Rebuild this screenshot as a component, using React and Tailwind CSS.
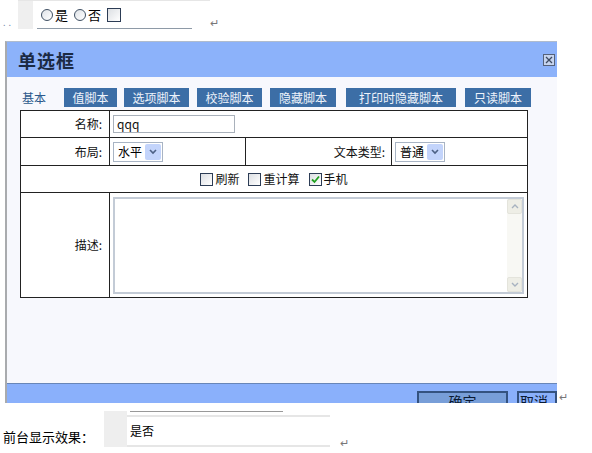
import React from "react";

const cjk = { fontFamily: '"Noto Sans CJK SC", "Noto Sans", sans-serif' };

function Radio({ label }) {
  return (
    <span className="inline-flex items-center gap-[2px]">
      <span className="inline-block h-[12px] w-[12px] rounded-full border border-[#3f5063] bg-gradient-to-br from-[#dfe3e8] to-white" />
      <span className="text-[13px] leading-none text-black">{label}</span>
    </span>
  );
}

function Check({ checked, label, big }) {
  return (
    <span className="inline-flex items-center gap-[2px]">
      <span
        className={`grid place-items-center border border-[#2c3c55] bg-gradient-to-br from-[#dcdfe3] to-white ${
          big ? "h-[14px] w-[14px]" : "h-[13px] w-[13px]"
        }`}
      >
        {checked ? (
          <svg width="9" height="9" viewBox="0 0 9 9">
            <path d="M1 4.5 L3.5 7 L8 1.5" fill="none" stroke="#21a121" strokeWidth="1.8" />
          </svg>
        ) : null}
      </span>
      {label ? <span className="text-[12px] leading-none text-[#111]">{label}</span> : null}
    </span>
  );
}

function Select({ value }) {
  return (
    <div className="flex h-[20px] w-[50px] items-center justify-between border border-[#a8b4c4] bg-white pl-[4px] pr-[1px]">
      <span className="text-[12px] leading-none text-black">{value}</span>
      <span className="grid h-[16px] w-[16px] place-items-center rounded-[2px] bg-[#c3d4fb]">
        <svg width="8" height="6" viewBox="0 0 8 6">
          <path d="M1 1 L4 4 L7 1" fill="none" stroke="#4d6185" strokeWidth="1.6" />
        </svg>
      </span>
    </div>
  );
}

function ScrollBtn({ up }) {
  return (
    <div className="grid h-[15px] w-[15px] place-items-center rounded-[2px] border border-[#e4e4dc] bg-[#eeeee6]">
      <svg width="8" height="5" viewBox="0 0 8 5">
        <path d={up ? "M1 4 L4 1 L7 4" : "M1 1 L4 4 L7 1"} fill="none" stroke="#a7b2c0" strokeWidth="1.4" />
      </svg>
    </div>
  );
}

const tabs = ["值脚本", "选项脚本", "校验脚本", "隐藏脚本", "打印时隐藏脚本", "只读脚本"];
const tabW = ["w-[53px]", "w-[65px]", "w-[65px]", "w-[66px]", "w-[110px]", "w-[66px]"];
const tabGap = ["ml-[18px]", "ml-[7px]", "ml-[8px]", "ml-[8px]", "ml-[10px]", "ml-[9px]"];

export default function App() {
  return (
    <div className="h-[453px] w-[592px] overflow-hidden bg-white" style={cjk}>
      {/* inline preview of the radio field */}
      <div className="flex h-[41px] items-start">
        <div className="flex h-[29px] w-[18px] items-end pb-[2px] pl-[3px]">
          <span className="text-[9px] leading-none tracking-[3px] text-[#7d93b0]">..</span>
        </div>
        <div className="h-[29px] w-[15px] border-t border-[#e6e6e6] bg-[#efefef]" />
        <div className="flex h-[29px] w-[177px] flex-col border-t border-[#e6e6e6]">
          <div className="flex flex-1 items-center gap-[6px] pl-[8px]">
            <Radio label="是" />
            <Radio label="否" />
            <Check big />
          </div>
          <div className="ml-[4px] h-[1px] w-[155px] bg-[#8e9aa7]" />
        </div>
        <span className="mt-[17px] text-[11px] leading-none text-[#777]">↵</span>
      </div>

      {/* dialog */}
      <div className="flex items-end">
        <div className="ml-[5px] flex h-[362px] w-[552px] flex-col overflow-hidden border-l-2 border-t border-l-[#a9abae] border-t-[#b0bccd]">
          <div className="flex h-[35px] items-center justify-between bg-[#8cb2fa] pl-[11px] pr-[2px]">
            <span className="text-[18px] font-bold leading-none tracking-[1px] text-[#1b2a44]">单选框</span>
            <span className="grid h-[12px] w-[12px] place-items-center border border-[#56627a] bg-[#c6d4ee]">
              <svg width="8" height="8" viewBox="0 0 8 8">
                <path d="M1 1 L7 7 M7 1 L1 7" stroke="#3d4a62" strokeWidth="1.3" />
              </svg>
            </span>
          </div>

          <div className="flex flex-1 flex-col bg-[#f7f8fd]">
            <div className="mt-[11px] flex h-[19px] items-center">
              <span className="ml-[15px] text-[12px] leading-none text-[#2d5a8c]">基本</span>
              {tabs.map((t, i) => (
                <span
                  key={t}
                  className={`${tabGap[i]} ${tabW[i]} grid h-[19px] place-items-center bg-[#3c6ea6] text-[12px] leading-none text-[#eef3fb]`}
                >
                  {t}
                </span>
              ))}
            </div>

            <div className="ml-[13px] mt-[3px] w-[508px] border border-[#222] bg-white text-[12px] text-[#111]">
              <div className="flex h-[27px] border-b border-[#222]">
                <div className="flex w-[89px] items-center justify-end border-r border-[#222] pr-[7px]">名称:</div>
                <div className="flex items-center pl-[3px]">
                  <div className="flex h-[18px] w-[122px] items-center border border-[#a9b1bb] pl-[3px] leading-none">qqq</div>
                </div>
              </div>
              <div className="flex h-[28px] border-b border-[#222]">
                <div className="flex w-[89px] items-center justify-end border-r border-[#222] pr-[7px]">布局:</div>
                <div className="flex w-[136px] items-center border-r border-[#222] pl-[3px]">
                  <Select value="水平" />
                </div>
                <div className="flex w-[146px] items-center justify-end border-r border-[#222] pr-[6px]">文本类型:</div>
                <div className="flex items-center pl-[3px]">
                  <Select value="普通" />
                </div>
              </div>
              <div className="flex h-[27px] items-center justify-center gap-[9px] border-b border-[#222]">
                <Check label="刷新" />
                <Check label="重计算" />
                <Check checked label="手机" />
              </div>
              <div className="flex h-[104px]">
                <div className="flex w-[89px] items-center justify-end border-r border-[#222] pr-[7px]">描述:</div>
                <div className="flex items-center pl-[3px]">
                  <div className="flex h-[97px] w-[411px] justify-end border-2 border-[#c3cbd6]">
                    <div className="flex w-[15px] flex-col justify-between bg-[#f8f8f4]">
                      <ScrollBtn up />
                      <ScrollBtn />
                    </div>
                  </div>
                </div>
              </div>
            </div>
          </div>

          <div className="flex h-[20px] items-start border-t border-[#6886b8] bg-[#8ab0fb] pt-[7px]">
            <span className="ml-[410px] flex h-[22px] w-[99px] justify-center border-2 border-[#34527f] bg-[#789ed8] pt-[1px] text-[14px] leading-none text-[#0b1a33]">
              确定
            </span>
            <span className="ml-[9px] flex h-[22px] w-[40px] shrink-0 justify-start border-2 border-[#34527f] bg-[#8ab0fb] pl-[1px] pt-[1px] text-[14px] leading-none text-[#0b1a33]">
              取消
            </span>
          </div>
        </div>
        <span className="mb-[1px] ml-[2px] text-[11px] leading-none text-[#777]">↵</span>
      </div>

      {/* front-end preview */}
      <div className="flex items-start">
        <span className="ml-[3px] mt-[27px] w-[101px] text-[13px] leading-none text-black">前台显示效果：</span>
        <div className="mt-[8px] flex h-[36px] w-[226px] flex-col">
          <div className="flex h-full">
            <div className="w-[23px] bg-[#eeeeee]" />
            <div className="flex flex-1 flex-col">
              <div className="ml-[3px] h-[1px] w-[153px] bg-[#999]" />
              <div className="mt-[3px] h-[2px] bg-[#e6e6e6]" />
              <div className="flex flex-1 items-center pl-[3px] text-[12px] leading-none text-black">是否</div>
              <div className="h-[2px] bg-[#e6e6e6]" />
            </div>
          </div>
        </div>
        <span className="ml-[10px] mt-[34px] text-[11px] leading-none text-[#777]">↵</span>
      </div>
    </div>
  );
}
